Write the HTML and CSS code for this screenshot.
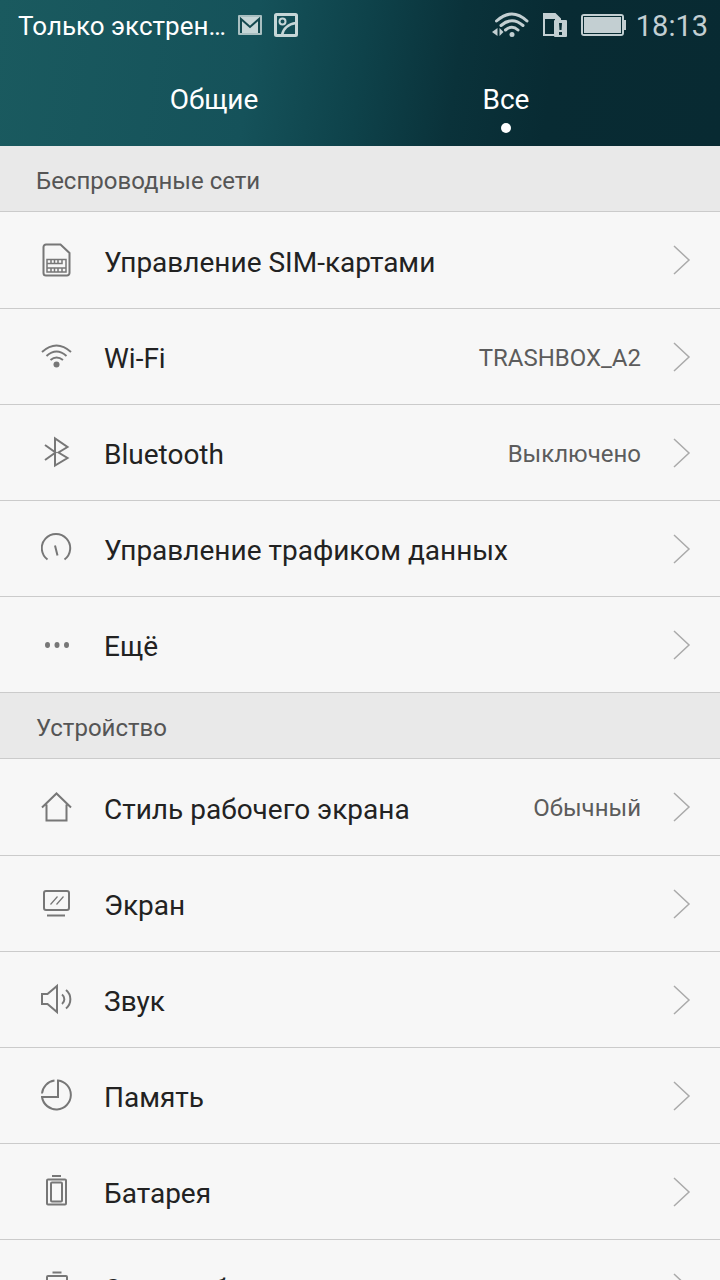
FILE: index.html
```
<!DOCTYPE html>
<html lang="ru">
<head>
    <meta charset="UTF-8">
    <meta name="viewport" content="width=device-width, initial-scale=1.0">
    <title>Настройки</title>
    <link rel="stylesheet" href="styles.css">
</head>
<body>

    <header class="header">
        <!-- Строка состояния -->
        <div class="status-bar">
            <span class="carrier">Только экстрен…</span>
            <svg class="gmail" width="24" height="20" viewBox="0 0 24 20">
                <rect width="24" height="20" rx="1" fill="#a9bfc1"/>
                <path d="M2 2h20v16H2z" fill="#c6d6d7"/>
                <path d="M3 18V4l9 8 9-8v14" fill="none" stroke="#14494f" stroke-width="2"/>
            </svg>
            <svg class="gallery" width="24" height="24" viewBox="0 0 24 24" fill="none" stroke="#c6d6d7">
                <rect x="1.5" y="1.5" width="21" height="21" rx="1" stroke-width="3"/>
                <circle cx="8.5" cy="8.5" r="3" stroke-width="2"/>
                <path d="M8 22c1-6 6-11 14-12" stroke-width="2.5"/>
            </svg>
            <div class="status-right">
                <svg width="37" height="26" viewBox="0 0 37 26" fill="none" stroke="#c3cfd2" stroke-width="3" stroke-linecap="round">
                    <path d="M4.5 9Q20 -5 35 9M9 13.5Q20 4 31 13.5M13.500 18Q20 12.5 26 18"/>
                    <circle cx="20" cy="22.5" r="2.5" fill="#c3cfd2" stroke="none"/>
                    <path d="M5.5 16v8L0 20zM7.5 16v8l4-4z" fill="#c3cfd2" stroke="none"/>
                </svg>
                <svg width="24" height="24" viewBox="0 0 24 24">
                    <path d="M1 1h11l5 5v16H1z" fill="none" stroke="#c3cfd2" stroke-width="2"/>
                    <path d="M1 1h11l5 5v2H12V6H1z" fill="#c3cfd2"/>
                    <rect x="11" y="7" width="13" height="17" rx="1" fill="#c3cfd2"/>
                    <path d="M16 10h3l-.5 7h-2zM16 19h3v3h-3z" fill="#082c33"/>
                </svg>
                <svg width="45" height="22" viewBox="0 0 45 22">
                    <rect x="1" y="1" width="41" height="20" rx="2" fill="none" stroke="#c3cfd2" stroke-width="2"/>
                    <rect x="3" y="3" width="37" height="16" fill="#c3cfd2"/>
                    <path d="M43 6h2v10h-2z" fill="#c3cfd2"/>
                    <rect x="2.5" y="2.5" width="38" height="17" fill="none" stroke="#082c33"/>
                </svg>
                <time class="clock">18:13</time>
            </div>
        </div>

        <!-- Вкладки -->
        <nav class="tabs">
            <button class="tab">Общие</button>
            <button class="tab active">Все</button>
        </nav>
    </header>

    <main>
        <h2 class="section-title">Беспроводные сети</h2>
        <ul class="list">
            <li><a class="row" href="#sim">
                <svg class="icon" viewBox="0 0 32 34">
                    <path d="M5.5 1.5h14l9 8.500V30a2.500 2.500 0 0 1-2.500 2.500H5A2.500 2.500 0 0 1 2.500 30V4A2.500 2.500 0 0 1 5 1.500z"/>
                    <path d="M6 16.500h19v12.500H6zM6 20.500h15V16.500M6 25h19M10 16.500v4M13.500 16.500v4M17 16.500v4M10 25v4M13.500 25v4M17 25v4M21 25v4" stroke-width="1.500"/>
                </svg>
                <span class="label">Управление SIM-картами</span>
                <svg class="arrow" viewBox="0 0 18 30"><path d="M1 1l15 14L1 29"/></svg>
            </a></li>
            <li><a class="row" href="#wifi">
                <svg class="icon" viewBox="0 0 32 34">
                    <path d="M1 12Q15.500 -1 30 12M5.500 16Q15.500 7 25.500 16M9.500 20Q15.500 15 22 20"/>
                    <circle class="solid" cx="15.500" cy="24.500" r="3"/>
                </svg>
                <span class="label">Wi-Fi</span>
                <span class="value">TRASHBOX_A2</span>
                <svg class="arrow" viewBox="0 0 18 30"><path d="M1 1l15 14L1 29"/></svg>
            </a></li>
            <li><a class="row" href="#bluetooth">
                <svg class="icon" viewBox="0 0 32 34">
                    <path d="M4 9l10.500 7.500L4 24M14 2.500v27L26.500 22l-9-5.500 9-5.500z"/>
                </svg>
                <span class="label">Bluetooth</span>
                <span class="value">Выключено</span>
                <svg class="arrow" viewBox="0 0 18 30"><path d="M1 1l15 14L1 29"/></svg>
            </a></li>
            <li><a class="row" href="#traffic">
                <svg class="icon" viewBox="0 0 32 34">
                    <path d="M6.500 27.500a14.200 14.200 0 1 1 17 0M14 13.500l2.500 10"/>
                </svg>
                <span class="label">Управление трафиком данных</span>
                <svg class="arrow" viewBox="0 0 18 30"><path d="M1 1l15 14L1 29"/></svg>
            </a></li>
            <li><a class="row" href="#more">
                <svg class="icon" viewBox="0 0 32 34">
                    <g class="solid"><ellipse cx="6.500" cy="17" rx="2.500" ry="3"/><ellipse cx="16" cy="17" rx="2.500" ry="3"/><ellipse cx="25.500" cy="17" rx="2.500" ry="3"/></g>
                </svg>
                <span class="label">Ещё</span>
                <svg class="arrow" viewBox="0 0 18 30"><path d="M1 1l15 14L1 29"/></svg>
            </a></li>
        </ul>

        <h2 class="section-title">Устройство</h2>
        <ul class="list">
            <li><a class="row" href="#home-style">
                <svg class="icon" viewBox="0 0 32 34">
                    <path d="M1 17.500L15.500 3.500 30 17.500M5.500 14.500v16h20v-16"/>
                </svg>
                <span class="label">Стиль рабочего экрана</span>
                <span class="value">Обычный</span>
                <svg class="arrow" viewBox="0 0 18 30"><path d="M1 1l15 14L1 29"/></svg>
            </a></li>
            <li><a class="row" href="#screen">
                <svg class="icon" viewBox="0 0 32 34">
                    <rect x="3" y="4" width="25" height="19" rx="2"/>
                    <path d="M6 28.500h18"/>
                    <path d="M9.500 17.500l7-8M15.500 17.500l7-8" stroke-width="1.200"/>
                </svg>
                <span class="label">Экран</span>
                <svg class="arrow" viewBox="0 0 18 30"><path d="M1 1l15 14L1 29"/></svg>
            </a></li>
            <li><a class="row" href="#sound">
                <svg class="icon" viewBox="0 0 32 34">
                    <path d="M1 11h5.500L16 3v26L6.500 21H1zM21 11.500a6 6 0 0 1 0 9.500M25 7a12 12 0 0 1 0 18.500"/>
                </svg>
                <span class="label">Звук</span>
                <svg class="arrow" viewBox="0 0 18 30"><path d="M1 1l15 14L1 29"/></svg>
            </a></li>
            <li><a class="row" href="#memory">
                <svg class="icon" viewBox="0 0 32 34">
                    <path d="M17 1.500a14.500 14.500 0 1 1-16 16.500h16zM1 14.500A14.500 14.500 0 0 1 13.500 1.500"/>
                </svg>
                <span class="label">Память</span>
                <svg class="arrow" viewBox="0 0 18 30"><path d="M1 1l15 14L1 29"/></svg>
            </a></li>
            <li><a class="row" href="#battery">
                <svg class="icon" viewBox="0 0 32 34">
                    <rect x="6" y="4.500" width="19" height="25" rx="1"/>
                    <rect x="10" y="7.500" width="11" height="19" rx="1"/>
                    <path d="M11 1h9"/>
                </svg>
                <span class="label">Батарея</span>
                <svg class="arrow" viewBox="0 0 18 30"><path d="M1 1l15 14L1 29"/></svg>
            </a></li>
            <li><a class="row" href="#power">
                <svg class="icon" viewBox="0 0 32 34">
                    <rect x="6" y="5" width="20" height="25" rx="1"/>
                    <path d="M11.500 1.500h9"/>
                </svg>
                <span class="label">Энергосбережение</span>
                <svg class="arrow" viewBox="0 0 18 30"><path d="M1 1l15 14L1 29"/></svg>
            </a></li>
        </ul>
    </main>

</body>
</html>
```
FILE: styles.css
```
* {
    box-sizing: border-box;
}

body {
    margin: 0;
    height: 100vh;
    overflow: hidden;
    font-family: Roboto, "Noto Sans", sans-serif;
    background-color: #f7f7f7;
    color: #222;
}

.header {
    background: linear-gradient(98deg, #1a5a5f 0%, #15525a 35%, #0e424a 50%, #0a323a 63%, #082b33 76%, #082a32 100%);
    color: #fff;
}

.status-bar {
    display: flex;
    align-items: center;
    height: 50px;
    padding: 0 12px 0 18px;
    font-size: 26px;
}

.carrier {
    margin-right: 12px;
    padding-top: 2px;
}

.gmail {
    margin-right: 12px;
}

.status-right {
    display: flex;
    align-items: center;
    margin-left: auto;
}

.status-right svg + svg {
    margin-left: 14px;
}

.clock {
    margin-left: 10px;
    font-size: 29px;
    padding-top: 2px;
    color: #c3cfd2;
}

.tabs {
    display: flex;
    justify-content: center;
    height: 96px;
}

.tab {
    position: relative;
    width: 292px;
    padding: 2px 0 0;
    border: none;
    background: none;
    color: #fff;
    font: inherit;
    font-size: 28px;
    cursor: pointer;
}

.tab.active::after {
    content: "";
    position: absolute;
    left: 50%;
    bottom: 13px;
    width: 10px;
    height: 10px;
    margin-left: -5px;
    border-radius: 50%;
    background-color: #fff;
}

.section-title {
    margin: 0;
    padding: 4px 36px 0;
    height: 65px;
    line-height: 62px;
    background-color: #e9e9e9;
    color: #555;
    font-size: 24px;
    font-weight: normal;
}

.list {
    margin: 0;
    padding: 0;
    list-style: none;
    border-top: 1px solid #cbcbcb;
    border-bottom: 1px solid #cbcbcb;
}

.row {
    display: flex;
    align-items: center;
    height: 96px;
    padding: 0 29px 0 41px;
    color: #222;
    text-decoration: none;
}

.list li + li .row {
    border-top: 1px solid #cbcbcb;
}

.icon {
    width: 32px;
    height: 34px;
    margin-right: 31px;
    fill: none;
    stroke: #777;
    stroke-width: 2;
}

.icon .solid {
    fill: #777;
    stroke: none;
}

.label {
    flex: 1;
    padding-top: 4px;
    font-size: 28px;
}

.value {
    padding-top: 2px;
    margin-right: 32px;
    color: #5c5c5c;
    font-size: 24px;
}

.arrow {
    width: 18px;
    height: 30px;
    fill: none;
    stroke: #aaa;
    stroke-width: 1.5;
}
```
